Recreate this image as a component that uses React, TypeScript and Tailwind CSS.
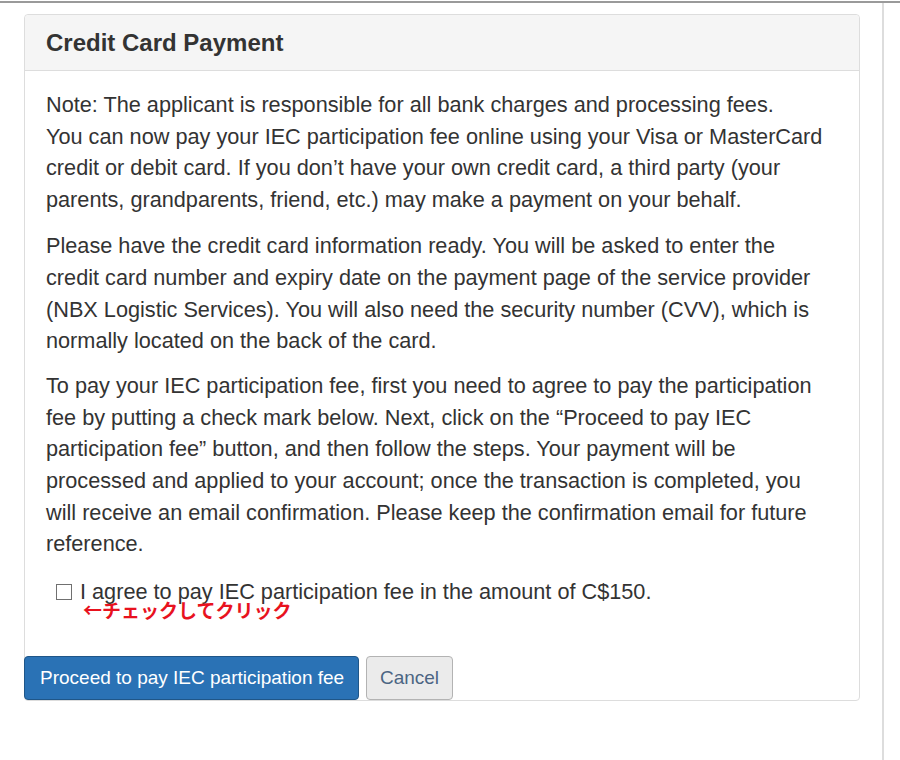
export default function App() {
  return (
    <div className="w-[900px] h-[760px] bg-white overflow-hidden font-['Liberation_Sans',Arial,sans-serif] text-[#333]">
      <div className="pt-px">
        <div className="h-[2px] bg-[#9a9a9a]" />
      </div>
      <div className="flex h-[757px]">
        <div className="w-[882px] pl-[24px] pt-[11px]">
          {/* Panel */}
          <div className="w-[836px] h-[687px] border border-[#dddddd] rounded-[4px] flex flex-col">
            <div className="h-[56px] bg-[#f5f5f5] border-b border-[#dddddd] rounded-t-[4px] flex items-center pl-[21px]">
              <h3 className="text-[24px] font-bold text-[#333]">Credit Card Payment</h3>
            </div>
            <div className="pl-[21px] pt-[18px] text-[21.7px] leading-[31.6px] text-[#333]">
              <p className="mb-[15px]">
                Note: The applicant is responsible for all bank charges and processing fees.
                <br />
                You can now pay your IEC participation fee online using your Visa or MasterCard
                <br />
                credit or debit card. If you don’t have your own credit card, a third party (your
                <br />
                parents, grandparents, friend, etc.) may make a payment on your behalf.
              </p>
              <p className="mb-[13.5px]">
                Please have the credit card information ready. You will be asked to enter the
                <br />
                credit card number and expiry date on the payment page of the service provider
                <br />
                (NBX Logistic Services). You will also need the security number (CVV), which is
                <br />
                normally located on the back of the card.
              </p>
              <p>
                To pay your IEC participation fee, first you need to agree to pay the participation
                <br />
                fee by putting a check mark below. Next, click on the “Proceed to pay IEC
                <br />
                participation fee” button, and then follow the steps. Your payment will be
                <br />
                processed and applied to your account; once the transaction is completed, you
                <br />
                will receive an email confirmation. Please keep the confirmation email for future
                <br />
                reference.
              </p>
              <div className="mt-[21px] pl-[10px] flex items-center gap-[8px] leading-[22px]">
                <span className="w-[16px] h-[16px] border-[1.5px] border-[#707070] bg-white" />
                <span>I agree to pay IEC participation fee in the amount of C$150.</span>
              </div>
              <div className="pl-[37px] -mt-[2px] h-[18px] text-[19px] leading-[18px] font-bold text-[#e8121e] font-['Noto_Sans_CJK_JP',sans-serif]">
                ←チェックしてクリック
              </div>
            </div>
            <div className="mt-auto -ml-px flex gap-[7px]">
              <button className="h-[44px] w-[335px] bg-[#2a72b5] border border-[#1f5688] rounded-[4px] text-white text-[19px] text-left pl-[15px]">
                Proceed to pay IEC participation fee
              </button>
              <button className="h-[44px] w-[87px] bg-[#ebebeb] border border-[#b3b3b3] rounded-[4px] text-[#4b6583] text-[19px]">
                Cancel
              </button>
            </div>
          </div>
        </div>
        <div className="w-[2px] bg-[#dddddd]" />
      </div>
    </div>
  );
}
